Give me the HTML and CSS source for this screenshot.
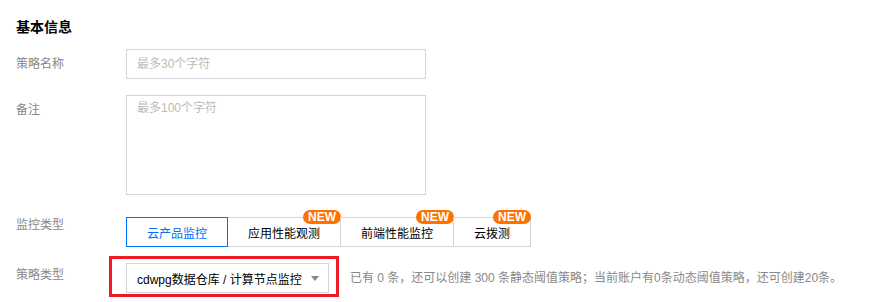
FILE: index.html
```html
<!DOCTYPE html>
<html lang="zh-CN">
<head>
<meta charset="UTF-8">
<title>基本信息</title>
<link rel="stylesheet" href="styles.css">
</head>
<body>
<div class="page">
  <h3 class="section-title">基本信息</h3>

  <div class="form-item">
    <label class="form-label">策略名称</label>
    <div class="form-ctrl">
      <input class="text-input" type="text" placeholder="最多30个字符">
    </div>
  </div>

  <div class="form-item item-remark">
    <label class="form-label">备注</label>
    <div class="form-ctrl">
      <textarea class="text-area" placeholder="最多100个字符"></textarea>
    </div>
  </div>

  <div class="form-item item-tabs">
    <label class="form-label">监控类型</label>
    <div class="form-ctrl">
      <div class="seg-group">
        <button class="seg seg-active">云产品监控</button>
        <button class="seg">应用性能观测<span class="badge">NEW</span></button>
        <button class="seg">前端性能监控<span class="badge">NEW</span></button>
        <button class="seg">云拨测<span class="badge">NEW</span></button>
      </div>
    </div>
  </div>

  <div class="form-item item-type">
    <label class="form-label">策略类型</label>
    <div class="form-ctrl type-ctrl">
      <div class="select-wrap">
        <div class="select-box">
          <span class="select-text">cdwpg数据仓库 / 计算节点监控</span>
          <span class="select-arrow"></span>
        </div>
        <div class="mark-box"></div>
      </div>
      <span class="help-text">已有 0 条，还可以创建 300 条静态阈值策略；当前账户有0条动态阈值策略，还可创建20条。</span>
    </div>
  </div>
</div>
</body>
</html>
```

FILE: styles.css
```css
html, body {
height: 302px;
overflow: hidden;
}
body {
margin: 0;
background-color: #fff;
font-family: "Liberation Sans", "Noto Sans CJK SC", sans-serif;
font-size: 12px;
color: #000;
}
.page {
padding: 16px 16px 0 16px;
}
.section-title {
margin: 0 0 11px 0;
height: 22px;
font-size: 14px;
line-height: 22px;
font-weight: bold;
color: #000;
}
.form-item {
display: flex;
margin-bottom: 16px;
}
.item-remark {
margin-bottom: 15px;
}
.item-tabs {
margin-bottom: 16px;
}
.item-type {
margin-bottom: 0;
height: 30px;
}
.form-label {
width: 110px;
flex-shrink: 0;
line-height: 18px;
padding-top: 6px;
color: #888;
}
.item-type .form-label {
padding-top: 3px;
}
.text-input, .text-area {
box-sizing: border-box;
width: 300px;
border: 1px solid #cfd5de;
border-radius: 0;
padding: 0 10px;
font-family: inherit;
font-size: 12px;
color: #000;
outline: none;
margin: 0;
display: block;
}
.text-input {
height: 30px;
line-height: 28px;
}
.text-area {
height: 100px;
padding: 3px 10px;
line-height: 18px;
resize: none;
}
.text-input::placeholder, .text-area::placeholder {
color: #bbb;
}

/* segmented tabs */
.seg-group {
display: flex;
padding-top: 7px;
}
.seg {
position: relative;
box-sizing: border-box;
height: 30px;
padding: 0 20px;
margin: 0 0 0 -1px;
border: 1px solid #cfd5de;
background: #fff;
font-family: inherit;
font-size: 12px;
color: #000;
cursor: pointer;
}
.seg:first-child {
margin-left: 0;
}
.seg-active {
border-color: #006eff;
color: #006eff;
z-index: 1;
}
.badge {
position: absolute;
right: -1px;
top: -8px;
height: 14px;
padding: 0 5px;
line-height: 14px;
border-radius: 7px;
background-color: #ff7200;
color: #fff;
font-size: 12px;
font-weight: bold;
}

/* select */
.type-ctrl {
display: flex;
align-items: center;
height: 30px;
}
.select-wrap {
position: relative;
height: 30px;
}
.select-box {
box-sizing: border-box;
width: 203px;
height: 30px;
border: 1px solid #cfd5de;
padding: 0 10px;
display: flex;
align-items: center;
justify-content: space-between;
}
.select-text {
white-space: nowrap;
color: #000;
}
.select-arrow {
width: 0;
height: 0;
border-left: 4px solid transparent;
border-right: 4px solid transparent;
border-top: 5px solid #888;
margin-right: -1px;
}
.mark-box {
position: absolute;
left: -17px;
top: -7px;
width: 230px;
height: 41px;
box-sizing: border-box;
border: 3px solid #ec1c24;
}
.help-text {
margin-left: 21px;
color: #888;
white-space: nowrap;
line-height: 18px;
}
```
